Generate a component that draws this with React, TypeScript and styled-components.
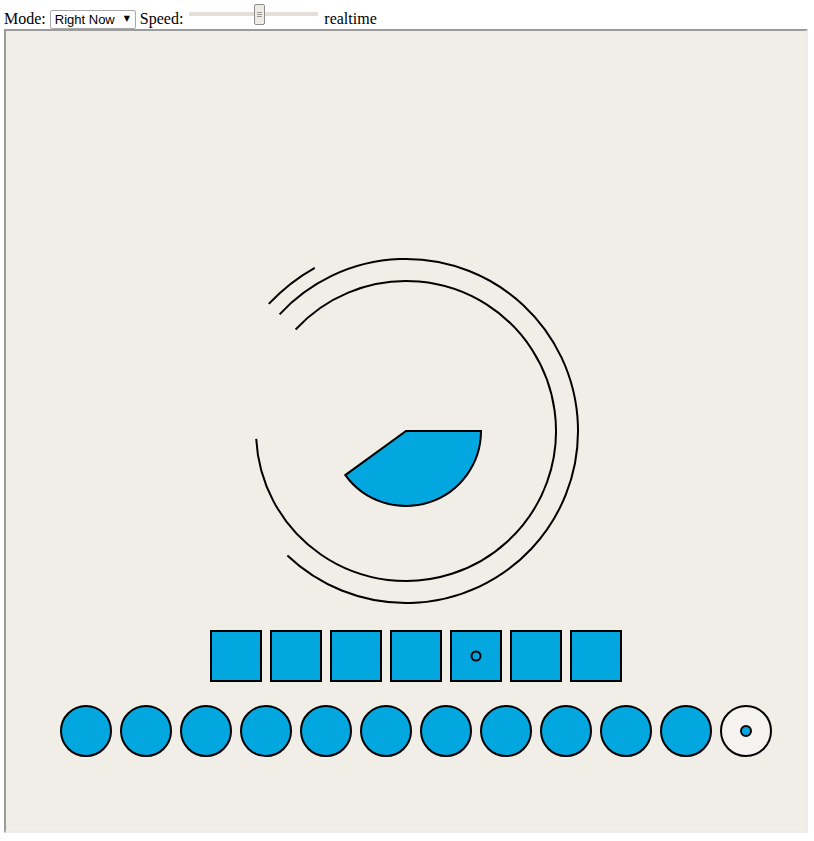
import React from "react";
import styled, { createGlobalStyle } from "styled-components";

const Global = createGlobalStyle`
  html, body { margin: 0; padding: 0; background: #fff; }
  body { font-family: "Liberation Serif", "Times New Roman", serif; font-size: 16px; color: #000; }
`;

const Page = styled.div`
  padding: 0 4px;
`;

const Toolbar = styled.div`
  display: flex;
  align-items: flex-start;
  height: 29px;
`;

const Label = styled.span<{ $gap?: number }>`
  font-family: "Liberation Serif", "Times New Roman", serif;
  font-size: 16px;
  line-height: 18px;
  margin-top: 10px;
  margin-right: ${(p) => p.$gap ?? 4}px;
  white-space: nowrap;
`;

const SelectWrap = styled.div`
  position: relative;
  margin-top: 10px;
  margin-right: 4px;
  width: 86px;
  height: 19px;
`;

const Select = styled.select`
  appearance: none;
  -webkit-appearance: none;
  box-sizing: border-box;
  width: 86px;
  height: 19px;
  margin: 0;
  padding: 0 0 0 4px;
  border: 1px solid #a9a9a9;
  border-radius: 2px;
  background: #fff;
  font-family: "Liberation Sans", Arial, sans-serif;
  font-size: 13px;
  line-height: 17px;
  color: #000;
  outline: none;
`;

const Arrow = styled.span`
  position: absolute;
  right: 6px;
  top: 4px;
  font-family: "DejaVu Sans", sans-serif;
  font-size: 8px;
  line-height: 10px;
  pointer-events: none;
  color: #000;
`;

const Range = styled.input`
  -webkit-appearance: none;
  appearance: none;
  width: 129px;
  height: 21px;
  margin: 3px 6px 0 2px;
  padding: 0;
  background: transparent;
  outline: none;

  &::-webkit-slider-runnable-track {
    height: 4px;
    background: #e3e0db;
    border-radius: 1px;
  }
  &::-webkit-slider-thumb {
    -webkit-appearance: none;
    box-sizing: border-box;
    width: 11px;
    height: 21px;
    margin-top: -8px;
    border: 1px solid #8e8c88;
    border-radius: 2px;
    background:
      linear-gradient(#9a9894, #9a9894) 50% 7px / 5px 1px no-repeat,
      linear-gradient(#9a9894, #9a9894) 50% 9px / 5px 1px no-repeat,
      linear-gradient(#9a9894, #9a9894) 50% 11px / 5px 1px no-repeat,
      #efece7;
  }
`;

const Canvas = styled.div`
  box-sizing: content-box;
  width: 800px;
  height: 800px;
  background: #f1eee8;
  border-style: solid;
  border-width: 2px;
  border-color: #9b9b9b #ececec #ececec #9b9b9b;
`;

const Board = styled.svg`
  display: block;
`;

const BLUE = "#02a7e0";
const CX = 400;
const CY = 400;

function arcPath(r: number, startDeg: number, endDeg: number) {
  const rad = (d: number) => (d * Math.PI) / 180;
  const x1 = CX + r * Math.cos(rad(startDeg));
  const y1 = CY + r * Math.sin(rad(startDeg));
  const x2 = CX + r * Math.cos(rad(endDeg));
  const y2 = CY + r * Math.sin(rad(endDeg));
  const large = endDeg - startDeg > 180 ? 1 : 0;
  return `M ${x1.toFixed(2)} ${y1.toFixed(2)} A ${r} ${r} 0 ${large} 1 ${x2.toFixed(2)} ${y2.toFixed(2)}`;
}

function wedgePath(r: number, startDeg: number, endDeg: number) {
  return `M ${CX} ${CY} L ` + arcPath(r, startDeg, endDeg).slice(2) + " Z";
}

const days = Array.from({ length: 7 }, (_, i) => i);
const months = Array.from({ length: 12 }, (_, i) => i);
const currentDay = 4;
const currentMonth = 11;

export default function App() {
  return (
    <Page>
      <Global />
      <Toolbar>
        <Label>Mode:</Label>
        <SelectWrap>
          <Select defaultValue="now">
            <option value="now">Right Now</option>
          </Select>
          <Arrow>▼</Arrow>
        </SelectWrap>
        <Label>Speed:</Label>
        <Range type="range" min={0} max={100} defaultValue={55} />
        <Label>realtime</Label>
      </Toolbar>
      <Canvas>
        <Board width={800} height={800} viewBox="0 0 800 800">
          <g fill="none" stroke="#000" strokeWidth={2}>
            <path d={arcPath(187, 222.8, 240.8)} />
            <path d={arcPath(172, 222.7, 493.6)} />
            <path d={arcPath(150, 222.6, 537)} />
          </g>
          <path d={wedgePath(75, 0, 144)} fill={BLUE} stroke="#000" strokeWidth={2} />
          {days.map((i) => (
            <g key={i}>
              <rect x={205 + 60 * i} y={600} width={50} height={50} fill={BLUE} stroke="#000" strokeWidth={2} />
              {i === currentDay && (
                <circle cx={230 + 60 * i} cy={625} r={4.5} fill="none" stroke="#000" strokeWidth={2} />
              )}
            </g>
          ))}
          {months.map((i) => (
            <g key={i}>
              <circle
                cx={80 + 60 * i}
                cy={700}
                r={25}
                fill={i === currentMonth ? "#f5f3ef" : BLUE}
                stroke="#000"
                strokeWidth={2}
              />
              {i === currentMonth && (
                <circle cx={80 + 60 * i} cy={700} r={5} fill={BLUE} stroke="#000" strokeWidth={2} />
              )}
            </g>
          ))}
        </Board>
      </Canvas>
    </Page>
  );
}
